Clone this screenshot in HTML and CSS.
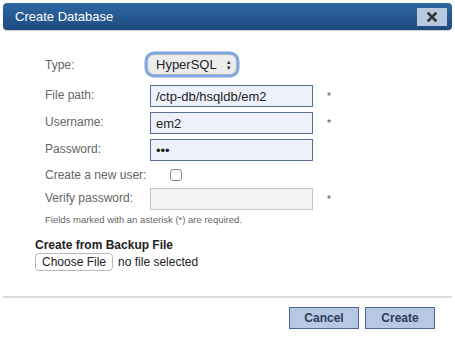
FILE: index.html
```html
<!DOCTYPE html>
<html lang="en">
<head>
    <meta charset="UTF-8">
    <title>Create Database</title>
    <link rel="stylesheet" href="styles.css">
</head>
<body>

<div class="dialog">
    <div class="titlebar">
        <span class="title">Create Database</span>
        <button class="close-button">
            <svg width="10" height="10" viewBox="0 0 10 10"><path d="M1.5 1.5 L8.5 8.5 M8.5 1.5 L1.5 8.5" stroke="#333" stroke-width="2.6" stroke-linecap="square"/></svg>
        </button>
    </div>

    <div class="content">
        <div class="form">
            <div class="row row-type">
                <label>Type:</label>
                <div class="select">HyperSQL <span class="arrows">&#9650;<br>&#9660;</span></div>
            </div>
            <div class="row">
                <label for="file-path">File path:</label>
                <input type="text" id="file-path" value="/ctp-db/hsqldb/em2">
                <span class="req">*</span>
            </div>
            <div class="row">
                <label for="username">Username:</label>
                <input type="text" id="username" value="em2">
                <span class="req">*</span>
            </div>
            <div class="row">
                <label for="password">Password:</label>
                <input type="password" id="password" value="abc">
            </div>
            <div class="row row-check">
                <label for="new-user">Create a new user:</label>
                <span class="checkbox"></span>
            </div>
            <div class="row">
                <label for="verify">Verify password:</label>
                <input type="password" id="verify" class="disabled" disabled>
                <span class="req">*</span>
            </div>
            <p class="note">Fields marked with an asterisk (*) are required.</p>
        </div>

        <div class="backup">
            <h4>Create from Backup File</h4>
            <div class="file-line">
                <span class="file-button">Choose File</span>
                <span class="file-name">no file selected</span>
            </div>
        </div>
    </div>

    <div class="footer">
        <button class="btn">Cancel</button>
        <button class="btn">Create</button>
    </div>
</div>

</body>
</html>
```

FILE: styles.css
```css
body {
    font-family: Arial, "Liberation Sans", sans-serif;
    margin: 0;
    background-color: #fff;
    width: 455px;
    height: 345px;
    overflow: hidden;
}
.dialog {
    padding: 3px;
}
.titlebar {
    height: 27px;
    border-radius: 4px;
    background: linear-gradient(#2d68a3, #1f4a80);
    box-shadow: 0 1px 1px rgba(0,0,0,0.2);
    display: flex;
    align-items: center;
    justify-content: space-between;
    padding: 0 5px 0 12px;
}
.title {
    color: #fff;
    font-size: 13px;
}
.close-button {
    width: 30px;
    height: 18px;
    border: none;
    background-color: #b8c9df;
    display: flex;
    align-items: center;
    justify-content: center;
    padding: 0;
}
.content {
    padding: 0 0 0 32px;
}
.form {
    padding: 21px 0 0 10px;
}
.row {
    display: flex;
    align-items: center;
    height: 27px;
}
.row label {
    width: 105px;
    font-size: 12px;
    color: #666;
    align-self: flex-start;
    padding-top: 3px;
}
.row-type {
    height: 31px;
    margin-bottom: 3px;
    align-items: flex-start;
}
.row-type label {
    padding-top: 7px;
}
.select {
    margin-left: -2px;
    width: 80px;
    height: 19px;
    border-radius: 6px;
    background: #ececec;
    box-shadow: 0 0 0 1px #b5b5b5, 0 0 0 3.5px #7ea6ea;
    font-size: 13px;
    color: #222;
    display: flex;
    align-items: center;
    padding-left: 8px;
    box-sizing: content-box;
    margin-top: 4px;
}
.arrows {
    font-size: 6px;
    line-height: 6px;
    margin-left: 9px;
    color: #333;
}
.row input {
    width: 163px;
    height: 22px;
    box-sizing: border-box;
    border: 1px solid #5a6f94;
    background-color: #eef1f9;
    font-family: Arial, "Liberation Sans", sans-serif;
    font-size: 13px;
    color: #222;
    padding: 2px 5px;
    margin: 0;
    align-self: flex-start;
}
.row input.disabled {
    background-color: #f3f3f3;
    border: 1px solid #c4c4c4;
}
.req {
    margin-left: 14px;
    font-size: 10px;
    color: #555;
    align-self: flex-start;
    padding-top: 6px;
}
.row-check {
    height: 18px;
    margin-bottom: 4px;
}
.row-check label {
    padding-top: 2px;
}
.checkbox {
    margin-left: 20px;
    width: 10px;
    height: 10px;
    border: 1px solid #8a8a8a;
    border-radius: 3px;
    background: #fff;
}
.note {
    font-size: 9.5px;
    color: #666;
    margin: -1px 0 0;
}
.backup {
    padding: 13px 0 0 3px;
    margin-left: -3px;
}
.backup h4 {
    margin: 0;
    font-size: 12px;
    color: #222;
}
.file-line {
    display: flex;
    align-items: center;
    margin-top: 1px;
}
.file-button {
    font-size: 12px;
    color: #222;
    border: 1px solid #b9b9b9;
    border-radius: 4px;
    padding: 1px 6px;
    background: #fff;
}
.file-name {
    font-size: 12px;
    color: #222;
    margin-left: 5px;
}
.footer {
    margin-top: 25px;
    border-top: 2px solid #dcdcdc;
    display: flex;
    justify-content: flex-end;
    padding: 9px 17px 0 0;
    gap: 6px;
}
.btn {
    width: 70px;
    height: 22px;
    border: 1px solid #4d6592;
    background-color: #b7c9e2;
    color: #2c3c5c;
    font-weight: bold;
    font-size: 12px;
    font-family: Arial, "Liberation Sans", sans-serif;
}
```
